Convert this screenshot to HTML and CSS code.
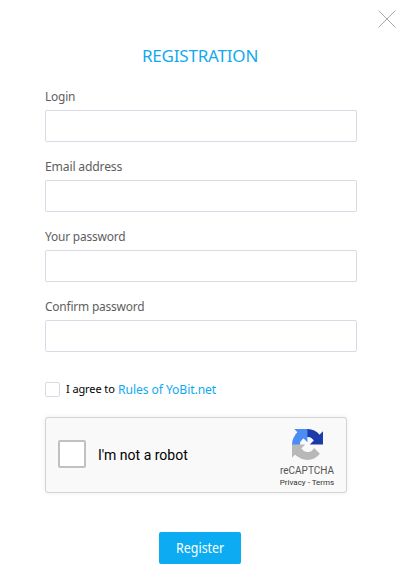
FILE: index.html
```
<!DOCTYPE html>
<html lang="en">
<head>
<meta charset="utf-8">
<title>Registration</title>
<link rel="stylesheet" href="styles.css">
</head>
<body>
<button class="close" type="button" aria-label="Close"><svg width="18" height="18" viewBox="0 0 18 18"><path d="M.5.5l17 17M17.5.5l-17 17"/></svg></button>
<form class="form">
  <h1 class="title">REGISTRATION</h1>
  <div class="field"><label for="login" class="label">Login</label><input id="login" class="input" type="text"></div>
  <div class="field"><label for="email" class="label label-email">Email address</label><input id="email" class="input" type="text"></div>
  <div class="field"><label for="pass" class="label">Your password</label><input id="pass" class="input" type="password"></div>
  <div class="field"><label for="confirm" class="label">Confirm password</label><input id="confirm" class="input" type="password"></div>
  <div class="agree"><span class="check"></span><span class="agree-text">I agree to</span><a class="rules">Rules of YoBit.net</a></div>
  <div class="captcha">
    <span class="captcha-check"></span>
    <span class="captcha-text">I'm not a robot</span>
    <div class="brand">
      <svg class="logo" viewBox="0 0 64 64">
        <path fill="#1c3aa9" d="M64 31.955a33.3 33.3 0 0 0-.033-1.37V4.687l-7.16 7.16C50.948 4.674 42.033.093 32.05.093c-10.389 0-19.622 4.96-25.458 12.64l11.736 11.86a15.55 15.55 0 0 1 4.754-5.334c2.05-1.6 4.952-2.906 8.968-2.906.485 0 .86.057 1.135.163 4.976.393 9.288 3.139 11.828 7.124l-8.307 8.307L64 31.953"/>
        <path fill="#4a8df5" d="M31.862.094a33 33 0 0 0-1.37.033H4.594l7.16 7.16C4.58 13.147 0 22.06 0 32.046c0 10.388 4.96 19.622 12.64 25.458L24.5 45.768a15.55 15.55 0 0 1-5.334-4.754c-1.6-2.05-2.906-4.952-2.906-8.968 0-.485.057-.86.163-1.135.393-4.976 3.14-9.288 7.124-11.828l8.308 8.307L31.86.095"/>
        <path fill="#b8b8b8" d="M.001 32.045c.007.46.015.917.033 1.37v25.898l7.16-7.16c5.86 7.173 14.774 11.754 24.759 11.754 10.388 0 19.622-4.96 25.457-12.64l-11.736-11.86a15.55 15.55 0 0 1-4.754 5.335c-2.05 1.6-4.952 2.906-8.968 2.906-.485 0-.86-.057-1.135-.163-4.976-.393-9.288-3.139-11.828-7.124l8.307-8.307L0 32.045"/>
      </svg>
      <span class="brand-name">reCAPTCHA</span>
      <span class="brand-links">Privacy - Terms</span>
    </div>
  </div>
  <button class="submit" type="button"><span class="submit-text">Register</span></button>
</form>
</body>
</html>
```
FILE: styles.css
```
* { box-sizing: border-box; }
body { margin: 0; background: #fff; font-family: "Noto Sans", sans-serif; }
.close { position: absolute; top: 10px; right: 8px; width: 18px; height: 18px; padding: 0; border: 0; background: none; }
.close svg { display: block; fill: none; stroke: #aaa; stroke-width: 1; }
.form { width: 312px; margin-left: 45px; padding-top: 44px; display: flex; flex-direction: column; }
.title { margin: 0 0 15px; height: 24px; line-height: 24px; font-size: 17px; font-weight: 400; color: #12a9f0; text-align: center; letter-spacing: -.2px; padding-right: 2px; }
.field { height: 70px; display: flex; flex-direction: column; align-items: flex-start; }
.label { height: 27px; line-height: 26px; font-size: 13px; color: #5e5e5e; letter-spacing: -.2px; white-space: nowrap; transform: scaleX(.916); transform-origin: 0 50%; }
.label-email { transform: scaleX(.937); }
.input { width: 312px; height: 32px; border: 1px solid #d6dbe5; border-radius: 2px; background: #fff; padding: 0 8px; outline: 0; }
.agree { height: 16px; margin-top: 18px; display: flex; align-items: center; line-height: 16px; white-space: nowrap; }
.check { width: 15px; height: 15px; border: 1px solid #d6dbe5; border-radius: 2px; margin-right: 6px; }
.agree-text { font-size: 11px; color: #000; width: 52px; letter-spacing: -.1px; }
.rules { font-size: 13px; color: #12a9f0; letter-spacing: -.1px; transform: scaleX(.935); transform-origin: 0 50%; }
.captcha { width: 302px; height: 76px; margin-top: 20px; border: 1px solid #d3d3d3; border-radius: 3px; background: #f9f9f9; box-shadow: 0 0 4px 1px rgba(0,0,0,.05); display: flex; align-items: center; font-family: Roboto, sans-serif; }
.captcha-check { width: 28px; height: 28px; margin: -2px 12px 0; border: 2px solid #c1c1c1; border-radius: 2px; background: #fff; }
.captcha-text { font-size: 14px; color: #000; }
.brand { margin: 0 9px 0 auto; width: 60px; height: 74px; padding-top: 11px; display: flex; flex-direction: column; align-items: center; color: #555; white-space: nowrap; }
.logo { width: 31px; height: 31px; margin-bottom: 4px; }
.brand-name { font-size: 10px; line-height: 13px; }
.brand-links { font-size: 8px; line-height: 11px; color: #333; }
.submit { align-self: center; margin: 39px 2px 0 0; width: 82px; height: 32px; border: 0; border-radius: 2px; background: #0cabf2; color: #fff; padding: 0; font: 13.5px/32px "Noto Sans", sans-serif; }
.submit-text { display: inline-block; transform: scaleX(.92); }
```
